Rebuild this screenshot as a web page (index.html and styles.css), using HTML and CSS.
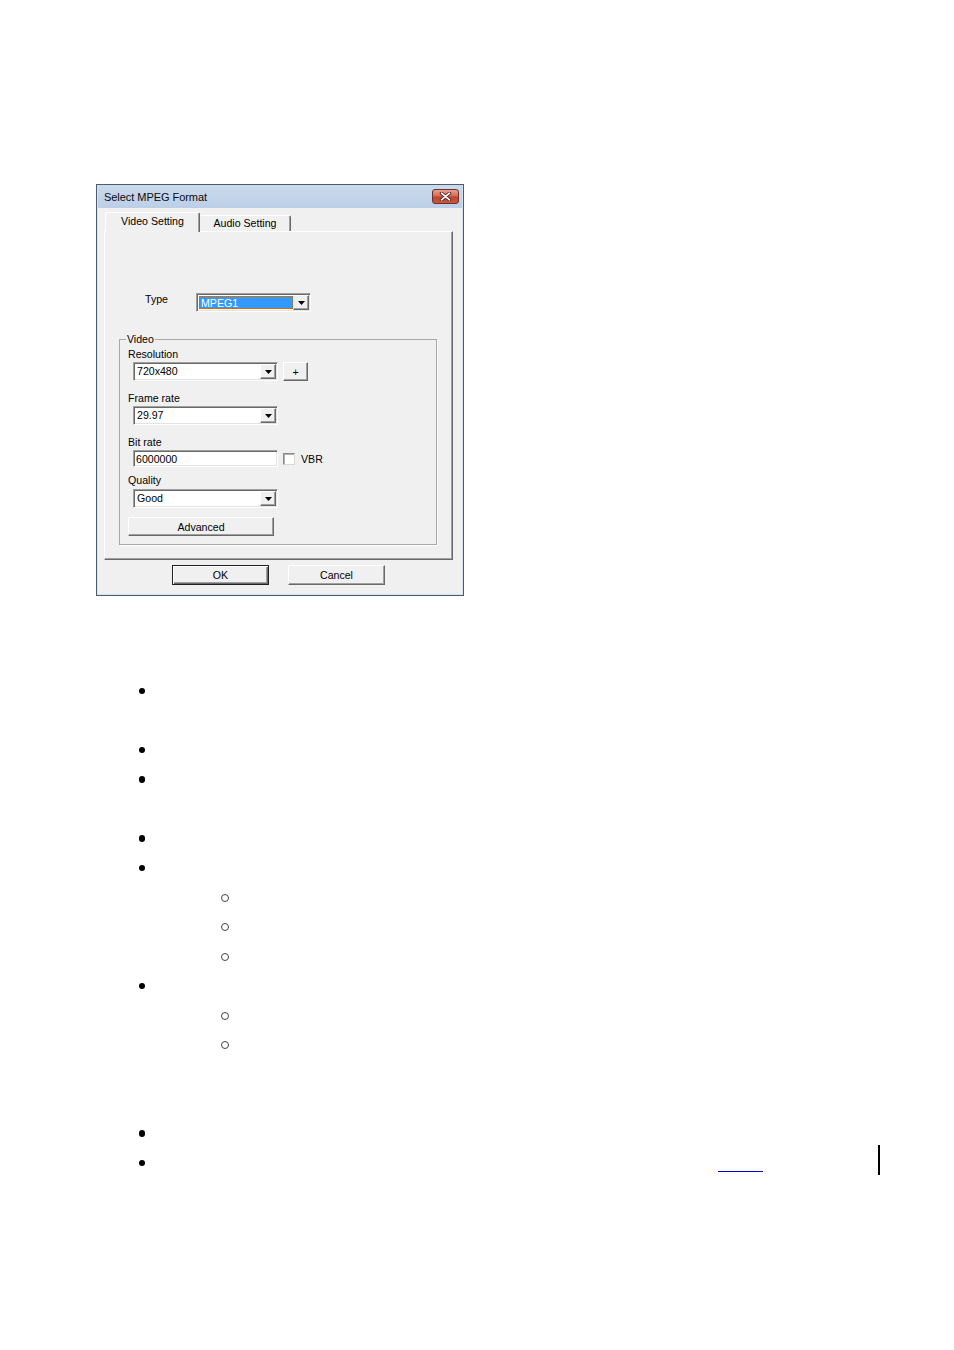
FILE: index.html
```html
<!DOCTYPE html>
<html>
<head>
<meta charset="utf-8">
<title>Select MPEG Format</title>
<link rel="stylesheet" href="styles.css">
</head>
<body>
<div class="page">
  <div class="dialog">
    <div class="titlebar">
      <span class="title">Select MPEG Format</span>
      <span class="close">
        <svg width="13" height="9" viewBox="0 0 13 9"><path d="M2.5 1.2 L10.5 7.8 M10.5 1.2 L2.5 7.8" stroke="#5a2219" stroke-width="3.4" stroke-linecap="round"/><path d="M2.5 1.2 L10.5 7.8 M10.5 1.2 L2.5 7.8" stroke="#ffffff" stroke-width="1.7" stroke-linecap="round"/></svg>
      </span>
    </div>
    <div class="client">
      <div class="tabs">
        <div class="tab active">Video Setting</div>
        <div class="tab">Audio Setting</div>
      </div>
      <div class="panel">
        <div class="type-row">
          <span class="type-label">Type</span>
          <div class="combo combo-type">
            <span class="combo-value selected">MPEG1</span>
            <span class="drop"><svg width="7" height="4" viewBox="0 0 7 4"><path d="M0 0 H7 L3.5 4 Z" fill="#000"/></svg></span>
          </div>
        </div>
        <div class="group">
          <div class="legend">Video</div>
          <div class="label">Resolution</div>
          <div class="ctl-row">
            <div class="combo combo-wide">
              <span class="combo-value">720x480</span>
              <span class="drop"><svg width="7" height="4" viewBox="0 0 7 4"><path d="M0 0 H7 L3.5 4 Z" fill="#000"/></svg></span>
            </div>
            <button class="btn btn-plus">+</button>
          </div>
          <div class="label label-gap">Frame rate</div>
          <div class="ctl-row">
            <div class="combo combo-wide">
              <span class="combo-value">29.97</span>
              <span class="drop"><svg width="7" height="4" viewBox="0 0 7 4"><path d="M0 0 H7 L3.5 4 Z" fill="#000"/></svg></span>
            </div>
          </div>
          <div class="label label-gap">Bit rate</div>
          <div class="ctl-row">
            <div class="edit">6000000</div>
            <span class="check"></span>
            <span class="check-label">VBR</span>
          </div>
          <div class="label label-gap-sm">Quality</div>
          <div class="ctl-row ctl-row-q">
            <div class="combo combo-wide">
              <span class="combo-value">Good</span>
              <span class="drop"><svg width="7" height="4" viewBox="0 0 7 4"><path d="M0 0 H7 L3.5 4 Z" fill="#000"/></svg></span>
            </div>
          </div>
          <button class="btn btn-advanced">Advanced</button>
        </div>
      </div>
      <div class="buttons">
        <button class="btn btn-ok">OK</button>
        <button class="btn btn-cancel">Cancel</button>
      </div>
    </div>
  </div>

  <ul class="bullets">
    <li class="row"><span class="dot"></span></li>
    <li class="row"></li>
    <li class="row"><span class="dot"></span></li>
    <li class="row"><span class="dot"></span></li>
    <li class="row"></li>
    <li class="row"><span class="dot"></span></li>
    <li class="row"><span class="dot"></span></li>
    <li class="row"><span class="circle"></span></li>
    <li class="row"><span class="circle"></span></li>
    <li class="row"><span class="circle"></span></li>
    <li class="row"><span class="dot"></span></li>
    <li class="row"><span class="circle"></span></li>
    <li class="row"><span class="circle"></span></li>
    <li class="row"></li>
    <li class="row"></li>
    <li class="row"><span class="dot"></span></li>
    <li class="row"><span class="dot"></span><span class="link-line"></span><span class="bar"></span></li>
  </ul>
</div>
</body>
</html>
```

FILE: styles.css
```css
* { box-sizing: border-box; }

html, body {
  margin: 0;
  padding: 0;
  background: #ffffff;
}

body {
  font-family: "Liberation Sans", Arial, sans-serif;
  width: 954px;
  min-height: 1350px;
}

.page {
  padding-top: 184px;
}

/* ---------- dialog window ---------- */
.dialog {
  margin-left: 96px;
  width: 368px;
  height: 412px;
  border: 1px solid #4c5c70;
  background: #d5e2f2;
  padding: 0 1px 1px 1px;
  display: flex;
  flex-direction: column;
}

.titlebar {
  height: 23px;
  display: flex;
  align-items: center;
  padding-left: 6px;
  padding-right: 3px;
  background: linear-gradient(#cbdaed, #bccfe7);
}

.title {
  font-size: 11px;
  letter-spacing: -0.05px;
  color: #0a0a0a;
}

.close {
  margin-left: auto;
  width: 27px;
  height: 15px;
  border: 1px solid #6e2f27;
  border-radius: 3px;
  background: linear-gradient(#e8a193, #d06a55 48%, #bd442e 52%, #c9573f);
  display: flex;
  align-items: center;
  justify-content: center;
}

.close svg { display: block; }

.client {
  flex: 1;
  background: #f0f0f0;
  font-size: 10.6px;
  color: #000;
}

/* ---------- tabs ---------- */
.tabs {
  height: 19px;
  margin-top: 4px;
  padding-left: 7px;
  display: flex;
  align-items: flex-end;
  position: relative;
  z-index: 1;
}

.tab {
  height: 16px;
  width: 91px;
  display: flex;
  align-items: center;
  justify-content: center;
  padding-bottom: 1px;
  background: #f0f0f0;
  border-top: 1px solid #ffffff;
  border-right: 1px solid #696969;
  box-shadow: inset -1px 0 0 #a0a0a0;
  border-radius: 2px 2px 0 0;
}

.tab.active {
  height: 20px;
  width: 95px;
  margin-bottom: -1px;
  padding-bottom: 3px;
  border-left: 1px solid #ffffff;
}

.panel {
  margin-left: 6px;
  width: 349px;
  height: 329px;
  border: 1px solid;
  border-color: #ffffff #696969 #696969 #ffffff;
  box-shadow: inset -1px -1px 0 #a0a0a0;
}

/* ---------- type row ---------- */
.type-row {
  margin-top: 61px;
  height: 19px;
  display: flex;
  align-items: center;
  padding-left: 40px;
}

.type-label {
  width: 51px;
  margin-bottom: 7px;
}

/* ---------- combo / edit ---------- */
.combo, .edit {
  height: 19px;
  background: #ffffff;
  border: 1px solid;
  border-color: #a0a0a0 #ffffff #ffffff #a0a0a0;
  box-shadow: inset 1px 1px 0 #696969, inset -1px -1px 0 #e3e3e3;
  display: flex;
  align-items: center;
  padding: 1px;
}

.combo-type { width: 115px; }
.combo-wide { width: 145px; }

.combo-value {
  flex: 1;
  padding-left: 1px;
  height: 13px;
  line-height: 12px;
  margin: 0 1px;
}

.combo-value.selected {
  background: #3399ff;
  color: #ffffff;
  border: 1px dotted #cc6600;
  padding-left: 1px;
  margin-left: 1px;
  margin-right: 0;
}

.drop {
  width: 16px;
  height: 15px;
  background: #f0f0f0;
  border: 1px solid;
  border-color: #ffffff #696969 #696969 #ffffff;
  box-shadow: inset -1px -1px 0 #a0a0a0;
  display: flex;
  align-items: center;
  justify-content: center;
  padding-top: 1px;
}

.drop svg { display: block; }

.edit {
  width: 145px;
  height: 17px;
  padding-left: 2px;
}

/* ---------- group box ---------- */
.group {
  margin-top: 27px;
  margin-left: 14px;
  width: 318px;
  border: 1px solid #a8a8a8;
  box-shadow: 1px 1px 0 #ffffff;
  padding-bottom: 8px;
}

.legend {
  width: fit-content;
  margin: -7px 0 0 6px;
  padding: 0 1px;
  height: 12px;
  line-height: 12px;
  background: #f0f0f0;
}

.label {
  margin-top: 2px;
  height: 14px;
  line-height: 14px;
  padding-left: 8px;
}

.label-gap { margin-top: 10px; }
.label-gap-sm { margin-top: 6px; }

.ctl-row {
  margin-top: 1px;
  padding-left: 13px;
  display: flex;
  align-items: center;
}

.ctl-row-q { margin-top: 2px; }

.check {
  margin-left: 5px;
  width: 12px;
  height: 12px;
  background: #ffffff;
  border: 1px solid;
  border-color: #8a8a8a #d8d8d8 #d8d8d8 #8a8a8a;
  box-shadow: inset 1px 1px 0 #b0b0b0;
}

.check-label {
  margin-left: 6px;
}

/* ---------- buttons ---------- */
.btn {
  font-family: "Liberation Sans", Arial, sans-serif;
  font-size: 10.6px;
  color: #000;
  background: #f0f0f0;
  border: 1px solid;
  border-color: #ffffff #696969 #696969 #ffffff;
  box-shadow: inset -1px -1px 0 #a0a0a0;
  padding: 0;
  margin: 0;
  height: 19px;
  display: flex;
  align-items: center;
  justify-content: center;
}

.btn-plus {
  margin-left: 5px;
  width: 25px;
}

.btn-advanced {
  margin-top: 9px;
  margin-left: 8px;
  width: 146px;
}

.buttons {
  margin-top: 5px;
  padding-left: 74px;
  display: flex;
  gap: 19px;
}

.buttons .btn {
  width: 97px;
  height: 20px;
}

.btn-ok {
  border: 1px solid #202020;
  box-shadow: inset 1px 1px 0 #ffffff, inset -1px -1px 0 #696969, inset -2px -2px 0 #a0a0a0;
}

/* ---------- bullet list ---------- */
.bullets {
  list-style: none;
  margin: 0;
  padding: 80.25px 0 0 0;
}

.row {
  height: 29.5px;
  display: flex;
  align-items: center;
}

.dot {
  width: 6.5px;
  height: 6.5px;
  border-radius: 50%;
  background: #000;
  margin-left: 138.5px;
  flex: none;
}

.circle {
  width: 8px;
  height: 8px;
  border-radius: 50%;
  border: 1px solid #444;
  margin-left: 220.5px;
  flex: none;
}

.link-line {
  width: 45px;
  height: 1.5px;
  margin-left: 573px;
  align-self: flex-end;
  margin-bottom: 5.75px;
  background: #0000cc;
  flex: none;
}

.bar {
  width: 2px;
  height: 30px;
  margin-left: 115px;
  margin-bottom: 6px;
  background: #000;
  flex: none;
}
```
